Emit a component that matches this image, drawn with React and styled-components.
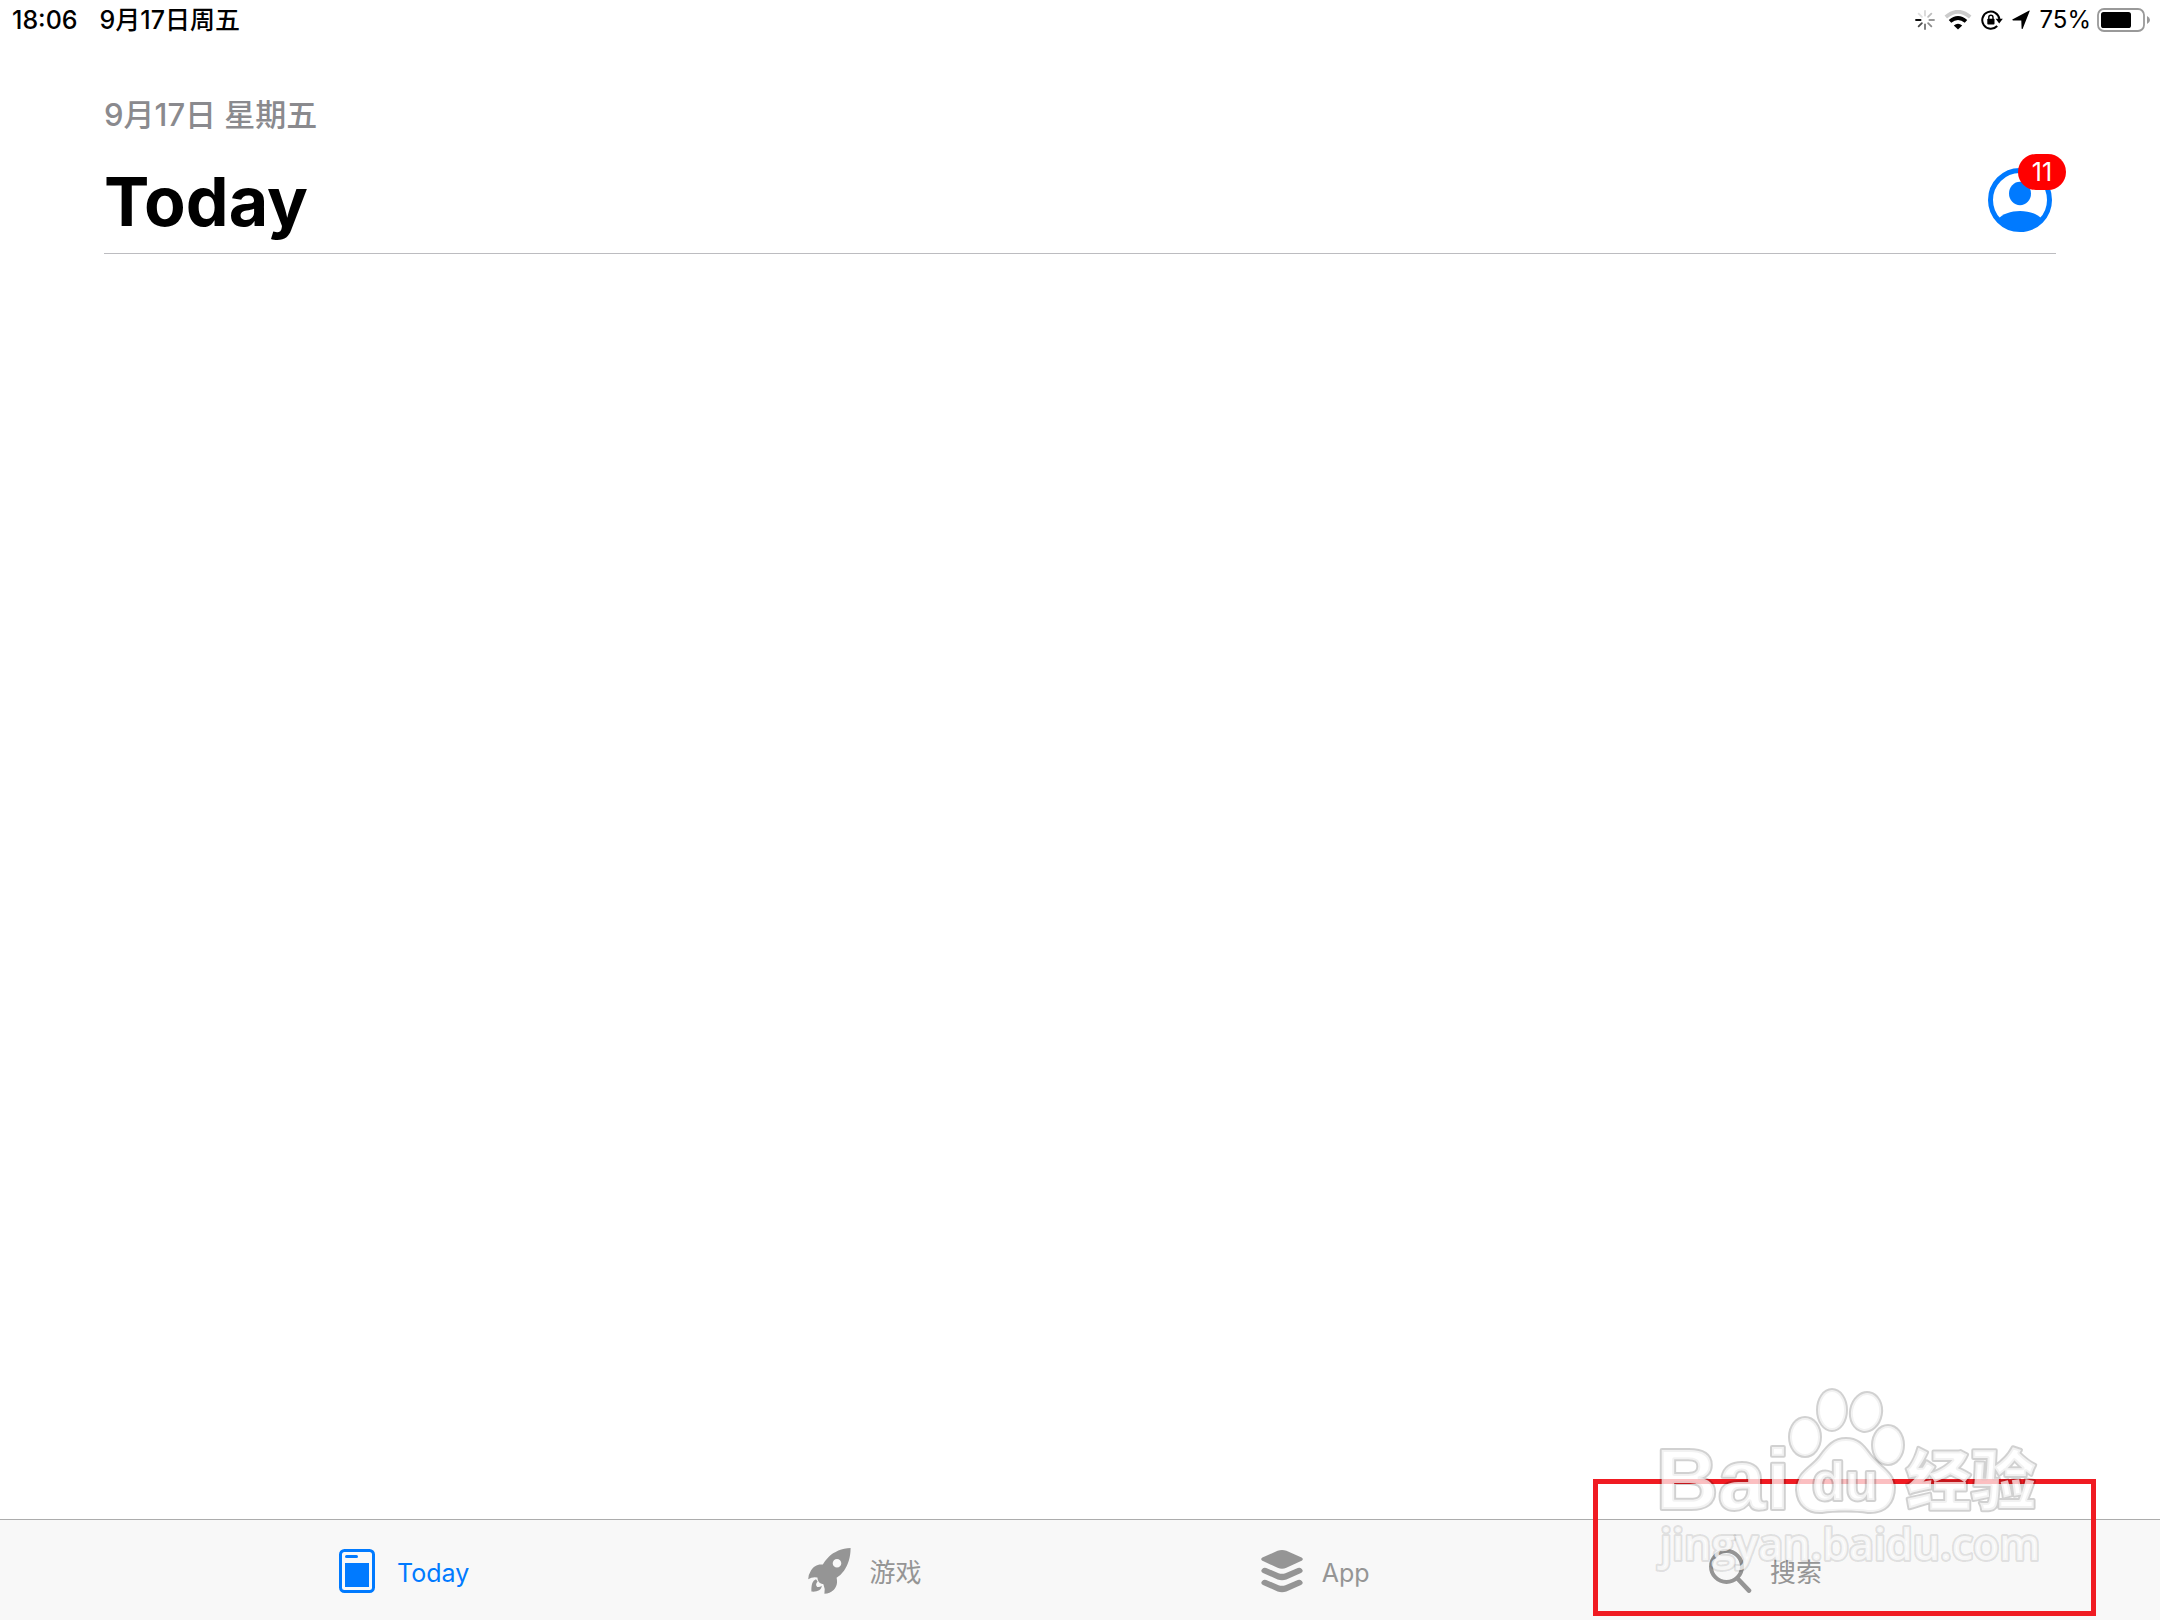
import React from "react";
import styled, { createGlobalStyle } from "styled-components";

const GlobalStyle = createGlobalStyle`
  * { box-sizing: border-box; }
  body {
    margin: 0;
    background: #ffffff;
    color: #000000;
    font-family: Inter, "Noto Sans CJK SC", sans-serif;
  }
`;

const Page = styled.div`
  position: relative;
  display: flex;
  flex-direction: column;
  min-height: 100vh;
`;

const StatusBar = styled.div`
  display: flex;
  justify-content: space-between;
  align-items: center;
  height: 40px;
  padding: 0 10px 0 12px;
  font-size: 25px;
  line-height: 40px;
  font-weight: 500;
`;

const StatusGroup = styled.div`
  display: flex;
  align-items: center;
  gap: ${(p) => p.$gap}px;
`;

const StatusIcon = styled.svg`
  display: block;
  flex: none;
`;

const Percent = styled.span`
  font-size: 24px;
  font-weight: 400;
`;

const Main = styled.main`
  flex: 1;
  padding: 55px 104px 0;
`;

const Header = styled.header`
  border-bottom: 1px solid #bcbcc0;
  padding-bottom: 9px;
`;

const DateLine = styled.p`
  margin: 0;
  font-size: 31px;
  line-height: 40px;
  font-weight: 500;
  color: #8a8a8e;
`;

const TitleRow = styled.div`
  display: flex;
  justify-content: space-between;
  align-items: center;
  margin-top: 21px;
  padding-right: 4px;
`;

const Title = styled.h1`
  margin: 0;
  padding-top: 2px;
  font-size: 68px;
  line-height: 86px;
  font-weight: 700;
`;

const AccountButton = styled.button`
  position: relative;
  width: 64px;
  height: 64px;
  margin: 0;
  padding: 0;
  border: 0;
  background: none;
  color: #007aff;
  font-family: inherit;

  svg { display: block; }
`;

const Badge = styled.span`
  position: absolute;
  top: -14px;
  right: -14px;
  width: 48px;
  height: 36px;
  border-radius: 18px;
  background: #ff0000;
  color: #ffffff;
  font-size: 25px;
  line-height: 36px;
  text-align: center;
`;

const TabBar = styled.nav`
  display: flex;
  justify-content: space-between;
  align-items: center;
  height: 101px;
  padding: 2px 338px 0 335px;
  border-top: 1px solid #acacac;
  background: #f8f8f8;
`;

const Tab = styled.button`
  display: flex;
  align-items: center;
  gap: 18px;
  margin: 0;
  padding: 0;
  border: 0;
  background: none;
  color: ${(p) => (p.$active ? "#007aff" : "#959595")};
  font-family: inherit;
  font-size: 26px;
  line-height: 40px;

  svg { display: block; flex: none; }
`;

const TabLabel = styled.span`
  padding-top: 4px;
  font-size: ${(p) => (p.$latin ? 25 : 26)}px;
`;

const Highlight = styled.div`
  position: absolute;
  right: 64px;
  bottom: 4px;
  width: 503px;
  height: 137px;
  border: 5px solid #f01b22;
  pointer-events: none;
`;

const Watermark = styled.svg`
  position: absolute;
  right: 110px;
  bottom: 40px;
  pointer-events: none;
  fill: rgba(255, 255, 255, 0.72);
  stroke: rgba(0, 0, 0, 0.18);
  stroke-width: 4px;
  stroke-linejoin: round;
  paint-order: stroke fill;
`;

const BrandText = styled.text`
  font-family: "Liberation Sans", sans-serif;
  font-weight: 700;
  font-size: ${(p) => p.$size}px;
`;

const BrandCjk = styled.text`
  font-family: "Noto Sans CJK SC", sans-serif;
  font-weight: 900;
  font-size: 65px;
`;

const BrandUrl = styled.text`
  font-family: "Open Sans", sans-serif;
  font-weight: 600;
  font-size: 43px;
  stroke: rgba(0, 0, 0, 0.1);
`;

const SPOKES = [
  [0, 0.15], [45, 0.25], [90, 0.4], [135, 0.45],
  [180, 0.55], [225, 0.7], [270, 0.95], [315, 0.12],
];

function Spinner() {
  return (
    <StatusIcon width="20" height="20" viewBox="0 0 20 20" aria-hidden="true">
      {SPOKES.map(([angle, opacity]) => (
        <path key={angle} d="M10 5.6V1" stroke="#000" strokeWidth="1.8" strokeLinecap="round"
          opacity={opacity} transform={`rotate(${angle} 10 10)`} />
      ))}
    </StatusIcon>
  );
}

function Wifi() {
  return (
    <StatusIcon width="28" height="20" viewBox="0 0 28 20" fill="none" aria-hidden="true">
      <path d="M1.8 7Q14 -3.4 26.2 7" stroke="#cccccc" strokeWidth="3.8" />
      <path d="M6 11.4Q14 4.6 22 11.4" stroke="#000" strokeWidth="3.8" />
      <path d="M9.8 15.4Q14 12 18.2 15.4L14 19.6Z" fill="#000" />
    </StatusIcon>
  );
}

function RotationLock() {
  return (
    <StatusIcon width="22" height="20" viewBox="0 0 22 20" fill="none" aria-hidden="true">
      <path d="M16.2 16A8.6 8.6 0 1 1 18.4 9" stroke="#000" strokeWidth="2" />
      <path d="M14.6 8.8H21.8L18.2 13.4Z" fill="#000" />
      <rect x="6.3" y="8.8" width="7.2" height="5.8" rx="0.8" fill="#000" />
      <path d="M7.8 9V7.4A2.1 2.1 0 0 1 12 7.4V9" stroke="#000" strokeWidth="1.4" />
    </StatusIcon>
  );
}

function Location() {
  return (
    <StatusIcon width="18" height="20" viewBox="0 0 18 20" aria-hidden="true">
      <path d="M17.6 1.2L10.8 18.4Q10.2 19.5 9.6 18.4L9.3 10.4H1Q-0.4 10 0.8 9.2L16.8 0.8Q18 0.2 17.6 1.2Z" />
    </StatusIcon>
  );
}

function Battery() {
  return (
    <StatusIcon width="53" height="24" viewBox="0 0 53 24" aria-hidden="true">
      <rect x="1" y="1" width="46" height="22" rx="6" fill="none" stroke="#999999" strokeWidth="1.8" />
      <rect x="4" y="4" width="30" height="16" rx="2.6" />
      <path d="M50 8Q53 9.5 53 12T50 16Z" fill="#999999" />
    </StatusIcon>
  );
}

function Person() {
  return (
    <svg width="64" height="64" viewBox="0 0 64 64" aria-hidden="true">
      <circle cx="32" cy="32" r="29.5" fill="none" stroke="currentColor" strokeWidth="5" />
      <ellipse cx="32" cy="25.5" rx="11" ry="11.8" fill="currentColor" />
      <path d="M10 51.5C18 40 46 40 54 51.5A31 31 0 0 1 10 51.5Z" fill="currentColor" />
    </svg>
  );
}

function TodayIcon() {
  return (
    <svg width="44" height="44" viewBox="0 0 44 44" fill="currentColor" aria-hidden="true">
      <rect x="5.5" y="1.5" width="33" height="41" rx="4" fill="none" stroke="currentColor" strokeWidth="3" />
      <rect x="10" y="6" width="13" height="3" rx="1.5" />
      <rect x="10" y="14" width="24" height="24" />
    </svg>
  );
}

function RocketIcon() {
  return (
    <svg width="44" height="46" viewBox="0 0 44 46" fill="currentColor" aria-hidden="true">
      <path fillRule="evenodd" d="M42.6 0C34 0.4 26 3.6 20.6 9Q17.2 12.4 14.8 16.6C9 16 5.6 18.6 3 22.6Q0.2 27 0.2 31.2Q4.6 28.6 9.4 29.6Q9.6 35.6 15.4 36.2Q17.4 40.6 16.4 45.8Q22 45.6 25.6 42C29 38.6 29.6 34.6 28.6 29.8Q33 27 36 22.8C40.4 16.4 42.6 8.6 42.6 0ZM29 11A4.3 4.3 0 1 0 29 19.6A4.3 4.3 0 1 0 29 11Z" />
      <path d="M8 31.2C4.4 32.6 3.2 36.6 3.4 43.6C9.4 44 13.2 42.4 13.8 37.8Q12 39.4 9.2 39Q6.8 36.4 9.6 33.4Z" />
    </svg>
  );
}

function StackIcon() {
  return (
    <svg width="44" height="44" viewBox="0 0 44 44" fill="currentColor" aria-hidden="true">
      <path d="M17.6 1.8Q22 0 26.4 1.8L41.6 8.6Q44 10.2 41.6 11.8L26.4 18.8Q22 20.8 17.6 18.8L2.4 11.8Q0 10.2 2.4 8.6Z" />
      <path d="M2.2 20Q3.8 18.2 6.2 19L18.6 24.2Q22 25.4 25.4 24.2L37.8 19Q40.2 18.2 41.8 20Q44 22.2 41 24L26.4 30.4Q22 32 17.6 30.4L3 24Q0 22.2 2.2 20Z" />
      <path d="M2.2 32Q3.8 30.2 6.2 31L18.6 36.2Q22 37.4 25.4 36.2L37.8 31Q40.2 30.2 41.8 32Q44 34.2 41 36L26.4 42.4Q22 44 17.6 42.4L3 36Q0 34.2 2.2 32Z" />
    </svg>
  );
}

function SearchIcon() {
  return (
    <svg width="44" height="44" viewBox="0 0 44 44" fill="none" stroke="currentColor" strokeLinecap="round" aria-hidden="true">
      <circle cx="18.5" cy="17.5" r="15.5" strokeWidth="4" />
      <path d="M30 30L41 41.6" strokeWidth="4.6" />
    </svg>
  );
}

const TABS = [
  { label: "Today", Icon: TodayIcon, active: true, latin: true },
  { label: "游戏", Icon: RocketIcon },
  { label: "App", Icon: StackIcon, latin: true },
  { label: "搜索", Icon: SearchIcon },
];

export default function App() {
  return (
    <Page>
      <GlobalStyle />
      <StatusBar>
        <StatusGroup $gap={22}>
          <span>18:06</span>
          <span>9月17日周五</span>
        </StatusGroup>
        <StatusGroup $gap={9}>
          <Spinner />
          <Wifi />
          <RotationLock />
          <Location />
          <StatusGroup $gap={6}>
            <Percent>75%</Percent>
            <Battery />
          </StatusGroup>
        </StatusGroup>
      </StatusBar>

      <Main>
        <Header>
          <DateLine>9月17日 星期五</DateLine>
          <TitleRow>
            <Title>Today</Title>
            <AccountButton type="button" aria-label="Account">
              <Person />
              <Badge>11</Badge>
            </AccountButton>
          </TitleRow>
        </Header>
      </Main>

      <TabBar>
        {TABS.map(({ label, Icon, active, latin }) => (
          <Tab key={label} type="button" $active={active}>
            <Icon />
            <TabLabel $latin={latin}>{label}</TabLabel>
          </Tab>
        ))}
      </TabBar>

      <Highlight />
      <Watermark width="400" height="200" viewBox="0 0 400 200">
        <ellipse cx="155" cy="57" rx="15" ry="19" />
        <ellipse cx="182" cy="30" rx="14" ry="20" />
        <ellipse cx="216" cy="32" rx="15" ry="19" transform="rotate(10 216 32)" />
        <ellipse cx="238" cy="65" rx="15" ry="19" />
        <path d="M196 59C184 59 178 66 170 77C162 88 147 92 147 110C148 125 158 133 172 132C185 130 205 130 218 132C235 133 244 123 244 107C243 92 230 88 220 75C212 64 207 59 196 59Z" />
        <BrandText $size={86} x="6" y="129">Bai</BrandText>
        <BrandText $size={54} x="162" y="120">du</BrandText>
        <BrandCjk x="256" y="124">经验</BrandCjk>
        <BrandUrl x="10" y="180">jingyan.baidu.com</BrandUrl>
      </Watermark>
    </Page>
  );
}
